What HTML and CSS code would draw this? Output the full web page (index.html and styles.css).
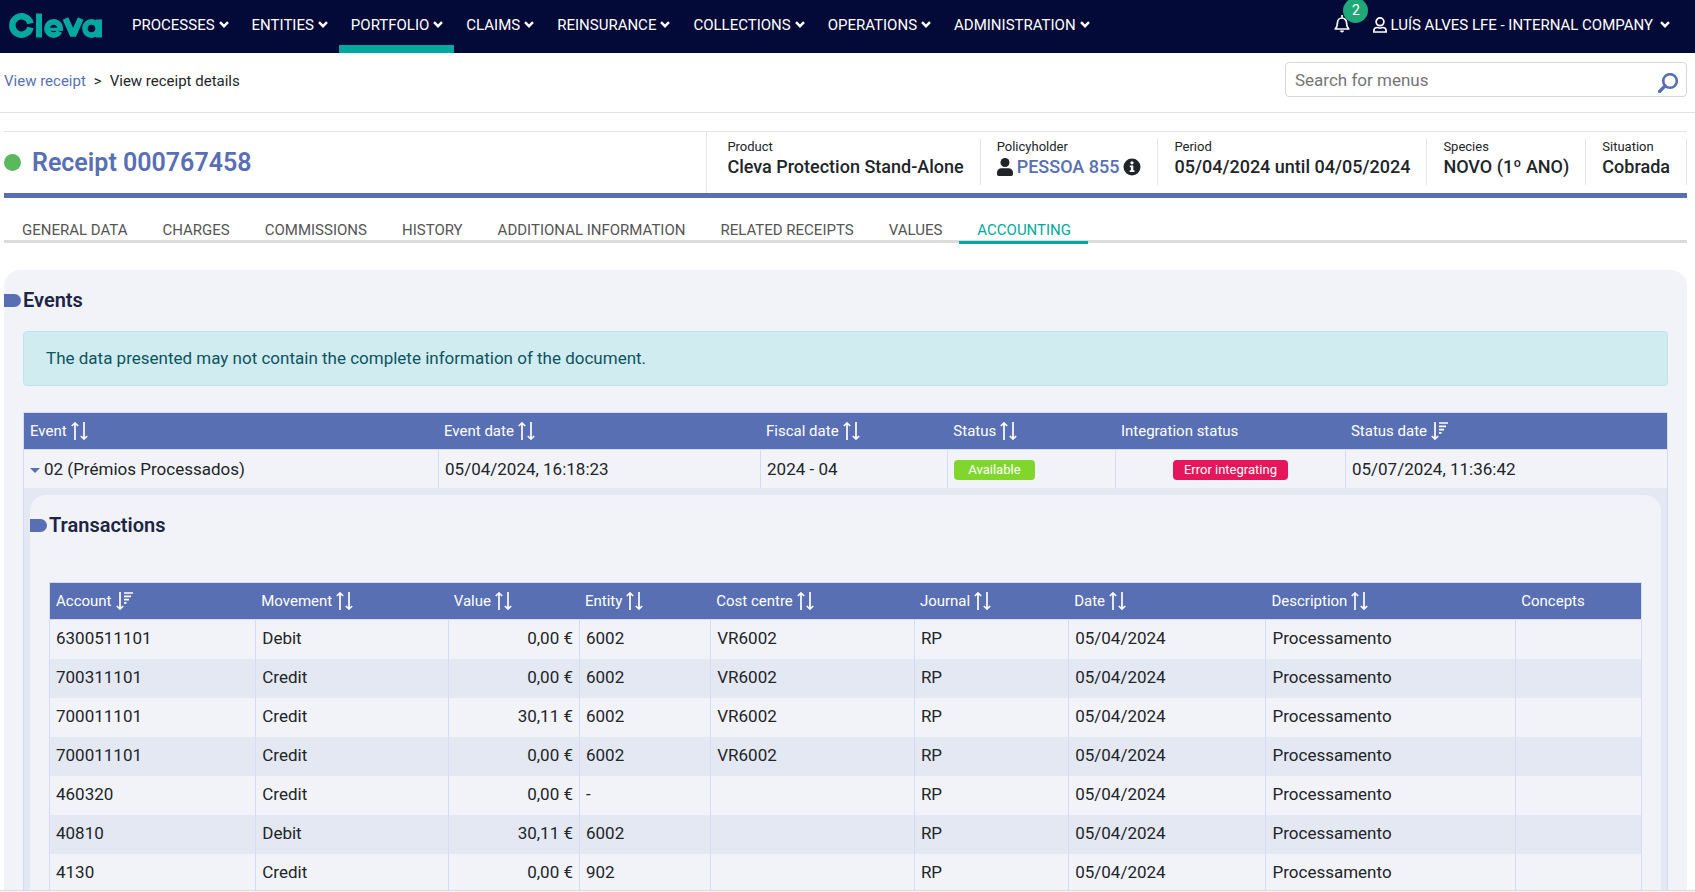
FILE: index.html
```html
<!DOCTYPE html>
<html lang="en">
<head>
<meta charset="utf-8">
<title>Receipt 000767458</title>
<link rel="stylesheet" href="styles.css">
</head>
<body>
<svg class="sprite" aria-hidden="true">
  <symbol id="chev" viewBox="0 0 10 7"><path d="M1 1.2l4 4 4-4" fill="none" stroke="currentColor" stroke-width="2.4"/></symbol>
  <symbol id="sort" viewBox="0 0 17 18"><path d="M4 18V1M.8 4L4 1l3.2 3M13 0v17M9.8 14l3.2 3 3.2-3" fill="none" stroke="currentColor" stroke-width="1.7"/></symbol>
  <symbol id="sortdown" viewBox="0 0 17 18"><path d="M4 0v17M.8 14L4 17l3.2-3M8 1h9M8 4.300h7M8 7.600h5M8 10.900h2.500" fill="none" stroke="currentColor" stroke-width="1.7"/></symbol>
</svg>
<header class="topbar">
  <a class="logo" href="#" aria-label="Cleva">
    <svg viewBox="0 0 93 25" width="93" height="25" fill="none" stroke="#00a99d">
      <path d="M21.500 10.400A9.200 9.200 0 1 0 21.500 14.600" stroke-width="6.500"/>
      <path d="M30 .5v24" stroke-width="6"/>
      <path d="M50.500 18.500A6.600 6.600 0 1 1 51.200 16" stroke-width="5.600"/>
      <path d="M37 16.300h17" stroke-width="3.200"/>
      <path d="M56.500 5.500l7.600 17 7.600-17" stroke-width="6.200" stroke-linejoin="bevel"/>
      <circle cx="82.500" cy="15.500" r="6.600" stroke-width="5.600"/>
      <path d="M90 6.500v18" stroke-width="6"/>
    </svg>
  </a>
  <nav class="menu">
    <button>PROCESSES<svg><use href="#chev"/></svg></button>
    <button>ENTITIES<svg><use href="#chev"/></svg></button>
    <button class="active">PORTFOLIO<svg><use href="#chev"/></svg></button>
    <button>CLAIMS<svg><use href="#chev"/></svg></button>
    <button>REINSURANCE<svg><use href="#chev"/></svg></button>
    <button>COLLECTIONS<svg><use href="#chev"/></svg></button>
    <button>OPERATIONS<svg><use href="#chev"/></svg></button>
    <button>ADMINISTRATION<svg><use href="#chev"/></svg></button>
  </nav>
  <button class="bell" aria-label="Notifications">
    <svg viewBox="0 0 16 18" width="16" height="18" fill="none" stroke="#fff" stroke-width="1.700"><path d="M8 0v2.500M1.200 14c2-2 2.300-3.500 2.300-6.500a4.500 4.500 0 0 1 9 0c0 3 .3 4.500 2.300 6.500z" stroke-linejoin="round"/><path d="M6 15.500h4a2 2 0 0 1-4 0z" fill="#fff" stroke="none"/></svg>
    <span class="count">2</span>
  </button>
  <button class="user">
    <svg class="person" viewBox="0 0 14 16" fill="none" stroke="#fff" stroke-width="1.700"><circle cx="7" cy="4.800" r="3.900"/><path d="M.9 15v-1.200c0-2 1.500-3.300 3.600-3.300.8 0 1.300.5 2.500.5s1.700-.5 2.500-.5c2.100 0 3.600 1.300 3.600 3.300V15z"/></svg>LUÍS ALVES LFE - INTERNAL COMPANY<svg class="caret"><use href="#chev"/></svg>
  </button>
</header>
<div class="subbar">
  <nav class="crumbs"><a href="#">View receipt</a><span>&gt;</span><span>View receipt details</span></nav>
  <label class="search">
    <input type="text" placeholder="Search for menus" aria-label="Search for menus">
    <svg viewBox="0 0 20 20" width="20" height="20" fill="none" stroke="#586fb3"><circle cx="12" cy="8" r="6.800" stroke-width="2.600"/><path d="M7 13l-5.500 5.500" stroke-width="3.200" stroke-linecap="round"/></svg>
  </label>
</div>
<main class="main">
  <section class="summary">
    <h1><i class="dot"></i>Receipt 000767458</h1>
    <dl class="facts">
      <div><dt>Product</dt><dd>Cleva Protection Stand-Alone</dd></div>
      <div><dt>Policyholder</dt><dd><svg class="solid" viewBox="0 0 16 18" width="16" height="18" fill="currentColor"><circle cx="8" cy="4.500" r="4.500"/><path d="M0 16v-1.500C0 12 2 10.300 4.300 10.300h7.400C14 10.300 16 12 16 14.500V16c0 1.200-.7 2-1.700 2H1.700C.7 18 0 17.200 0 16z"/></svg><a href="#">PESSOA 855</a><svg viewBox="0 0 18 18" width="18" height="18"><circle cx="9" cy="9" r="8.500" fill="currentColor"/><circle cx="9" cy="4.800" r="1.600" fill="#fff"/><path d="M6.800 7.500h3.500v4.700h1.200V14H6.700v-1.800h1.200V9.300H6.800z" fill="#fff"/></svg></dd></div>
      <div><dt>Period</dt><dd>05/04/2024 until 04/05/2024</dd></div>
      <div><dt>Species</dt><dd>NOVO (1º ANO)</dd></div>
      <div><dt>Situation</dt><dd>Cobrada</dd></div>
    </dl>
  </section>
  <nav class="tabs">
    <a href="#">GENERAL DATA</a><a href="#">CHARGES</a><a href="#">COMMISSIONS</a><a href="#">HISTORY</a><a href="#">ADDITIONAL INFORMATION</a><a href="#">RELATED RECEIPTS</a><a href="#">VALUES</a><a href="#" class="on">ACCOUNTING</a>
  </nav>
  <section class="panel">
    <h2>Events</h2>
    <p class="alert">The data presented may not contain the complete information of the document.</p>
    <table class="grid events">
      <colgroup><col class="e1"><col class="e2"><col class="e3"><col class="e4"><col class="e5"><col class="e6"></colgroup>
      <thead><tr>
        <th>Event<svg><use href="#sort"/></svg></th><th>Event date<svg><use href="#sort"/></svg></th><th>Fiscal date<svg><use href="#sort"/></svg></th><th>Status<svg><use href="#sort"/></svg></th><th>Integration status</th><th>Status date<svg><use href="#sortdown"/></svg></th>
      </tr></thead>
      <tbody>
        <tr class="row"><td><button class="toggle" aria-label="Collapse event"></button>02 (Prémios Processados)</td><td>05/04/2024, 16:18:23</td><td>2024 - 04</td><td><span class="badge ok">Available</span></td><td class="mid"><span class="badge err">Error integrating</span></td><td>05/07/2024, 11:36:42</td></tr>
        <tr><td class="detail" colspan="6">
          <section class="panel inner">
            <h2>Transactions</h2>
            <table class="grid lines">
              <colgroup><col class="t1"><col class="t2"><col class="t3"><col class="t3"><col class="t5"><col class="t6"><col class="t7"><col class="t8"><col class="t9"></colgroup>
              <thead><tr>
                <th>Account<svg><use href="#sortdown"/></svg></th><th>Movement<svg><use href="#sort"/></svg></th><th>Value<svg><use href="#sort"/></svg></th><th>Entity<svg><use href="#sort"/></svg></th><th>Cost centre<svg><use href="#sort"/></svg></th><th>Journal<svg><use href="#sort"/></svg></th><th>Date<svg><use href="#sort"/></svg></th><th>Description<svg><use href="#sort"/></svg></th><th>Concepts</th>
              </tr></thead>
              <tbody>
                <tr><td>6300511101</td><td>Debit</td><td class="num">0,00 €</td><td>6002</td><td>VR6002</td><td>RP</td><td>05/04/2024</td><td>Processamento</td><td></td></tr>
                <tr><td>700311101</td><td>Credit</td><td class="num">0,00 €</td><td>6002</td><td>VR6002</td><td>RP</td><td>05/04/2024</td><td>Processamento</td><td></td></tr>
                <tr><td>700011101</td><td>Credit</td><td class="num">30,11 €</td><td>6002</td><td>VR6002</td><td>RP</td><td>05/04/2024</td><td>Processamento</td><td></td></tr>
                <tr><td>700011101</td><td>Credit</td><td class="num">0,00 €</td><td>6002</td><td>VR6002</td><td>RP</td><td>05/04/2024</td><td>Processamento</td><td></td></tr>
                <tr><td>460320</td><td>Credit</td><td class="num">0,00 €</td><td>-</td><td></td><td>RP</td><td>05/04/2024</td><td>Processamento</td><td></td></tr>
                <tr><td>40810</td><td>Debit</td><td class="num">30,11 €</td><td>6002</td><td></td><td>RP</td><td>05/04/2024</td><td>Processamento</td><td></td></tr>
                <tr><td>4130</td><td>Credit</td><td class="num">0,00 €</td><td>902</td><td></td><td>RP</td><td>05/04/2024</td><td>Processamento</td><td></td></tr>
              </tbody>
            </table>
          </section>
        </td></tr>
      </tbody>
    </table>
  </section>
</main>
<footer class="foot"></footer>
</body>
</html>
```
FILE: styles.css
```css
* { box-sizing: border-box; }
html { height: 100%; }
body { margin: 0; height: 100%; display: flex; flex-direction: column; overflow: hidden; background: #fff; color: #212529; font-family: Roboto, "Liberation Sans", sans-serif; font-size: 17px; line-height: 24px; }
a { color: #586fb3; text-decoration: none; }
button { font: inherit; color: inherit; background: none; border: 0; padding: 0; cursor: pointer; }
svg { flex: none; }
.sprite { display: none; }

.topbar { flex: none; display: flex; align-items: stretch; height: 53px; padding-left: 9px; padding-right: 25px; background: #040a38; color: #fff; font-size: 15px; }
.logo { display: flex; align-items: center; margin-right: 18px; padding-bottom: 2px; }
.menu { display: flex; flex: 1; }
.menu button { display: flex; align-items: center; gap: 4px; padding: 4px 11px 0 12px; border-bottom: 8px solid transparent; white-space: nowrap; }
.menu button.active { border-bottom-color: #00a99d; }
.menu svg, .caret { width: 10px; height: 7px; }
.bell { position: relative; display: flex; align-items: center; margin-right: 23px; padding-bottom: 6px; }
.count { position: absolute; left: 9px; top: -2px; width: 25px; height: 25px; border-radius: 50%; background: #20a878; font-size: 14px; line-height: 25px; text-align: center; }
.user { display: flex; align-items: center; gap: 3px; padding-bottom: 4px; white-space: nowrap; }
.person { width: 14px; height: 16px; }
.caret { margin-left: 4px; }

.subbar { flex: none; display: flex; justify-content: space-between; align-items: flex-start; height: 60px; padding: 9px 8px 0 4px; border-bottom: 1px solid #dee2e6; }
.crumbs { display: flex; gap: 8px; padding-top: 7px; font-size: 15px; }
.search { position: relative; width: 402px; }
.search input { display: block; width: 100%; height: 35px; padding: 0 40px 0 9px; border: 1px solid #d5d7da; border-radius: 4px; background: #fff; font: inherit; color: #212529; }
.search input::placeholder { color: #757575; opacity: 1; }
.search svg { position: absolute; right: 9px; top: 11px; }

.main { flex: 1; min-height: 0; display: flex; flex-direction: column; overflow: hidden; padding: 18px 8px 0 4px; }
.summary { flex: none; display: flex; border-top: 1px solid #e3e3e8; border-bottom: 5px solid #586fb3; }
h1 { flex: 1; display: flex; align-items: center; gap: 11px; margin: 0; font-size: 25px; font-weight: 600; color: #586fb3; }
.dot { width: 17px; height: 17px; border-radius: 50%; background: #5cb85c; }
.facts { display: flex; margin: 0; padding: 7px 0 8px 4px; border-left: 1px solid #e3e3e8; }
.facts div { padding: 0 16px; border-right: 1px solid #e3e3e8; }
dt { font-size: 13px; line-height: 16px; }
dd { display: flex; align-items: center; gap: 4px; margin: 0; line-height: 24px; padding-bottom: 6px; font-size: 18px; font-weight: 500; white-space: nowrap; }

.tabs { flex: none; display: flex; margin-top: 18px; border-bottom: 3px solid #dcdcdc; font-size: 15px; line-height: 22px; }
.tabs a { padding: 3px 17px 0 18px; margin-bottom: -4px; border-bottom: 3px solid transparent; color: #555; }
.tabs .on { color: #00a99d; border-color: #00a99d; }

.panel { flex: 1 0 auto; margin-top: 27px; padding: 18px 19px; border-radius: 16px; background: #f2f3f9; }
h2 { display: flex; align-items: center; gap: 2px; margin: 0 0 19px -19px; font-size: 20px; font-weight: 600; line-height: 24px; color: #1d2545; }
h2::before { content: ""; width: 17px; height: 13px; border-radius: 0 7px 7px 0; background: #586fb3; }
.alert { margin: 0 0 26px; padding: 15px 22px; border: 1px solid #bee5eb; border-radius: 4px; background: #d1ecf0; color: #0c5460; line-height: 23px; }
.grid { width: 100%; table-layout: fixed; border-collapse: separate; border-spacing: 0; border: 1px solid #d6dcf7; }
th { height: 37px; padding: 0 6px; border-bottom: 1px solid #d6dcf7; background: #586fb3; color: #fff; font-size: 15px; font-weight: 400; text-align: left; white-space: nowrap; }
th svg { width: 17px; height: 18px; margin-left: 4px; vertical-align: -4px; }
td { height: 39px; padding: 0 6px 3px; border-left: 1px solid #d6dcf7; white-space: nowrap; }
td:first-child { border-left: 0; }
.row td { height: 38px; padding-bottom: 1px; }
.num { text-align: right; }
.mid { text-align: center; }
.toggle { width: 0; height: 0; margin-right: 4px; border: 5px solid transparent; border-top-color: #586fb3; border-bottom: 0; vertical-align: middle; }
.badge { display: inline-block; vertical-align: middle; border-radius: 4px; color: #fff; font-size: 13px; line-height: 20px; }
.ok { padding: 0 14px; background: #80d62d; }
.err { padding: 0 11px; background: #e4175c; }
td.detail { padding: 7px 6px; background: #e4e8f3; }
.inner { margin: 0; }
.inner h2 { margin-bottom: 45px; }
.lines tbody tr:nth-child(even) { background: #e4e8f3; }
.e1 { width: 25.2%; } .e2 { width: 19.6%; } .e3 { width: 11.4%; } .e4 { width: 10.2%; } .e5 { width: 14%; } .e6 { width: 19.6%; }
.t1 { width: 12.9%; } .t2 { width: 12.1%; } .t3 { width: 8.25%; } .t5 { width: 12.8%; } .t6 { width: 9.7%; } .t7 { width: 12.4%; } .t8 { width: 15.7%; } .t9 { width: 7.9%; }
.foot { flex: none; height: 2px; border-top: 1px solid #dcdcdc; background: #f5f5f5; }
```
